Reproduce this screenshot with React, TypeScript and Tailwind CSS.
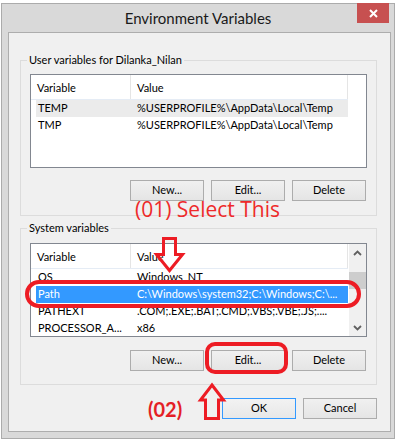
import React from "react";

type Row = { name: string; value: string; state?: "selected" | "inactive" };

const USER_ROWS: Row[] = [
  { name: "TEMP", value: "%USERPROFILE%\\AppData\\Local\\Temp", state: "inactive" },
  { name: "TMP", value: "%USERPROFILE%\\AppData\\Local\\Temp" },
];

const SYSTEM_ROWS: Row[] = [
  { name: "OS", value: "Windows_NT" },
  { name: "Path", value: "C:\\Windows\\system32;C:\\Windows;C:\\...", state: "selected" },
  { name: "PATHEXT", value: ".COM;.EXE;.BAT;.CMD;.VBS;.VBE;.JS;...." },
  { name: "PROCESSOR_A...", value: "x86" },
];

const WinButton = ({ children, focused }: { children: React.ReactNode; focused?: boolean }) => (
  <div
    className={
      focused
        ? "w-[74px] h-[21px] flex items-center justify-center border border-[#3399ff] bg-linear-to-b from-[#f2f2f2] to-[#e8e8e8]"
        : "w-[74px] h-[21px] flex items-center justify-center border border-[#acacac] bg-linear-to-b from-[#f0f0f0] to-[#e5e5e5]"
    }
  >
    {children}
  </div>
);

const Chevron = ({ down }: { down?: boolean }) => (
  <svg width="9" height="6" viewBox="0 0 9 6">
    <polyline
      points={down ? "1,1 4.5,4.5 8,1" : "1,5 4.5,1.5 8,5"}
      fill="none"
      stroke="#606060"
      strokeWidth="1.8"
    />
  </svg>
);

const ListView = ({ rows, scroll }: { rows: Row[]; scroll?: boolean }) => (
  <div className="w-[337px] h-[94px] border border-[#828790] bg-white flex overflow-hidden">
    <div className="w-[317px] flex flex-col">
      {/* header */}
      <div className="flex h-[25px] shrink-0 border-b border-[#e5ecf5]">
        <div className="w-[100px] border-r border-[#e5e5e5] pl-[6px] pt-[2px] flex items-center">Variable</div>
        <div className="w-[217px] border-r border-[#e5e5e5] pl-[6px] pt-[2px] flex items-center">Value</div>
      </div>
      {rows.map((r) => (
        <div
          key={r.name}
          className={
            r.state === "selected"
              ? "ml-[5px] w-[312px] h-[17px] shrink-0 flex items-center bg-[#3399ff] text-white"
              : r.state === "inactive"
              ? "ml-[5px] w-[312px] h-[17px] shrink-0 flex items-center bg-[#ebebeb]"
              : "ml-[5px] w-[312px] h-[17px] shrink-0 flex items-center"
          }
        >
          <div className="w-[95px] pl-[2px] whitespace-nowrap overflow-hidden">{r.name}</div>
          <div className="flex-1 pl-[6px] whitespace-nowrap overflow-hidden">{r.value}</div>
        </div>
      ))}
    </div>
    {scroll ? (
      <div className="w-[17px] ml-px bg-[#f0f0f0] flex flex-col">
        <div className="h-[17px] flex items-center justify-center">
          <Chevron />
        </div>
        <div className="flex-1">
          <div className="mt-[11px] h-[17px] bg-[#cdcdcd]" />
        </div>
        <div className="h-[17px] flex items-center justify-center">
          <Chevron down />
        </div>
      </div>
    ) : null}
  </div>
);

const GroupBox = ({
  label,
  children,
  pad,
}: {
  label: string;
  children: React.ReactNode;
  pad: string;
}) => (
  <div className={"relative ml-[11px] w-[357px] border border-[#dcdcdc] pl-[9px] " + pad}>
    <span className="absolute left-[6px] -top-[8px] bg-[#f0f0f0] px-[2px] leading-[14px]">{label}</span>
    {children}
  </div>
);

export default function App() {
  return (
    <div className="relative w-[397px] h-[441px] bg-white overflow-hidden font-['Lato','Liberation_Sans',sans-serif] text-[11px] text-black">
      {/* WINDOW */}
      <div className="ml-px mt-[3px] w-[394px] h-[436px] border border-[#ababab] bg-[#d9d9d9] pl-[6px] pr-[3px] flex flex-col">
        <div className="relative h-[28px] shrink-0 -ml-[6px] -mr-[3px] flex items-center justify-center text-[15px] text-[#1a1a1a]">
          Environment Variables
          <div className="absolute right-[5px] -top-px w-[32px] h-[20px] bg-[#c75050] flex items-center justify-center">
            <svg width="9" height="9" viewBox="0 0 9 9">
              <path d="M1 1 L8 8 M8 1 L1 8" stroke="white" strokeWidth="2" />
            </svg>
          </div>
        </div>

        {/* CLIENT AREA */}
        <div className="w-[383px] h-[400px] border border-[#adadad] bg-[#f0f0f0] flex flex-col">
          <div className="mt-[27px]">
            <GroupBox label="User variables for Dilanka_Nilan" pad="pt-[13px] pb-[14px]">
              <ListView rows={USER_ROWS} />
              <div className="mt-[12px] w-[337px] pr-px flex justify-end gap-[7px]">
                <WinButton>New...</WinButton>
                <WinButton>Edit...</WinButton>
                <WinButton>Delete</WinButton>
              </div>
            </GroupBox>
          </div>

          <div className="mt-[12px]">
            <GroupBox label="System variables" pad="pt-[14px] pb-[13px]">
              <ListView rows={SYSTEM_ROWS} scroll />
              <div className="mt-[13px] w-[337px] pr-px flex justify-end gap-[7px]">
                <WinButton>New...</WinButton>
                <WinButton>Edit...</WinButton>
                <WinButton>Delete</WinButton>
              </div>
            </GroupBox>
          </div>

          <div className="mt-[13px] ml-[11px] w-[357px] flex justify-end gap-[7px]">
            <WinButton focused>OK</WinButton>
            <WinButton>Cancel</WinButton>
          </div>
        </div>
      </div>

      {/* ANNOTATIONS */}
      <svg className="absolute left-0 top-0 pointer-events-none" width="397" height="441" viewBox="0 0 397 441">
        <polygon
          points="163.5,238.5 175.5,238.5 175.5,254.5 182.5,254.5 169.5,270.5 156.5,254.5 163.5,254.5"
          fill="none"
          stroke="#ed1c24"
          strokeWidth="3"
          strokeLinejoin="miter"
        />
        <rect x="27" y="282" width="332" height="24" rx="12" fill="none" stroke="#ed1c24" strokeWidth="4" />
        <rect x="207" y="344" width="79" height="28" rx="8" fill="none" stroke="#ed1c24" strokeWidth="4" />
        <polygon
          points="212,385 223.5,400 218.5,400 218.5,418.5 205.5,418.5 205.5,400 200.5,400"
          fill="none"
          stroke="#ed1c24"
          strokeWidth="3"
        />
      </svg>
      <div className="absolute left-[135px] top-[199px] font-['Open_Sans',sans-serif] text-[21px] leading-none text-[#ee2a2a] whitespace-nowrap">
        (01) Select This
      </div>
      <div className="absolute left-[148px] top-[399px] text-[20px] leading-none font-bold text-[#e41e26] whitespace-nowrap">
        (02)
      </div>
    </div>
  );
}
